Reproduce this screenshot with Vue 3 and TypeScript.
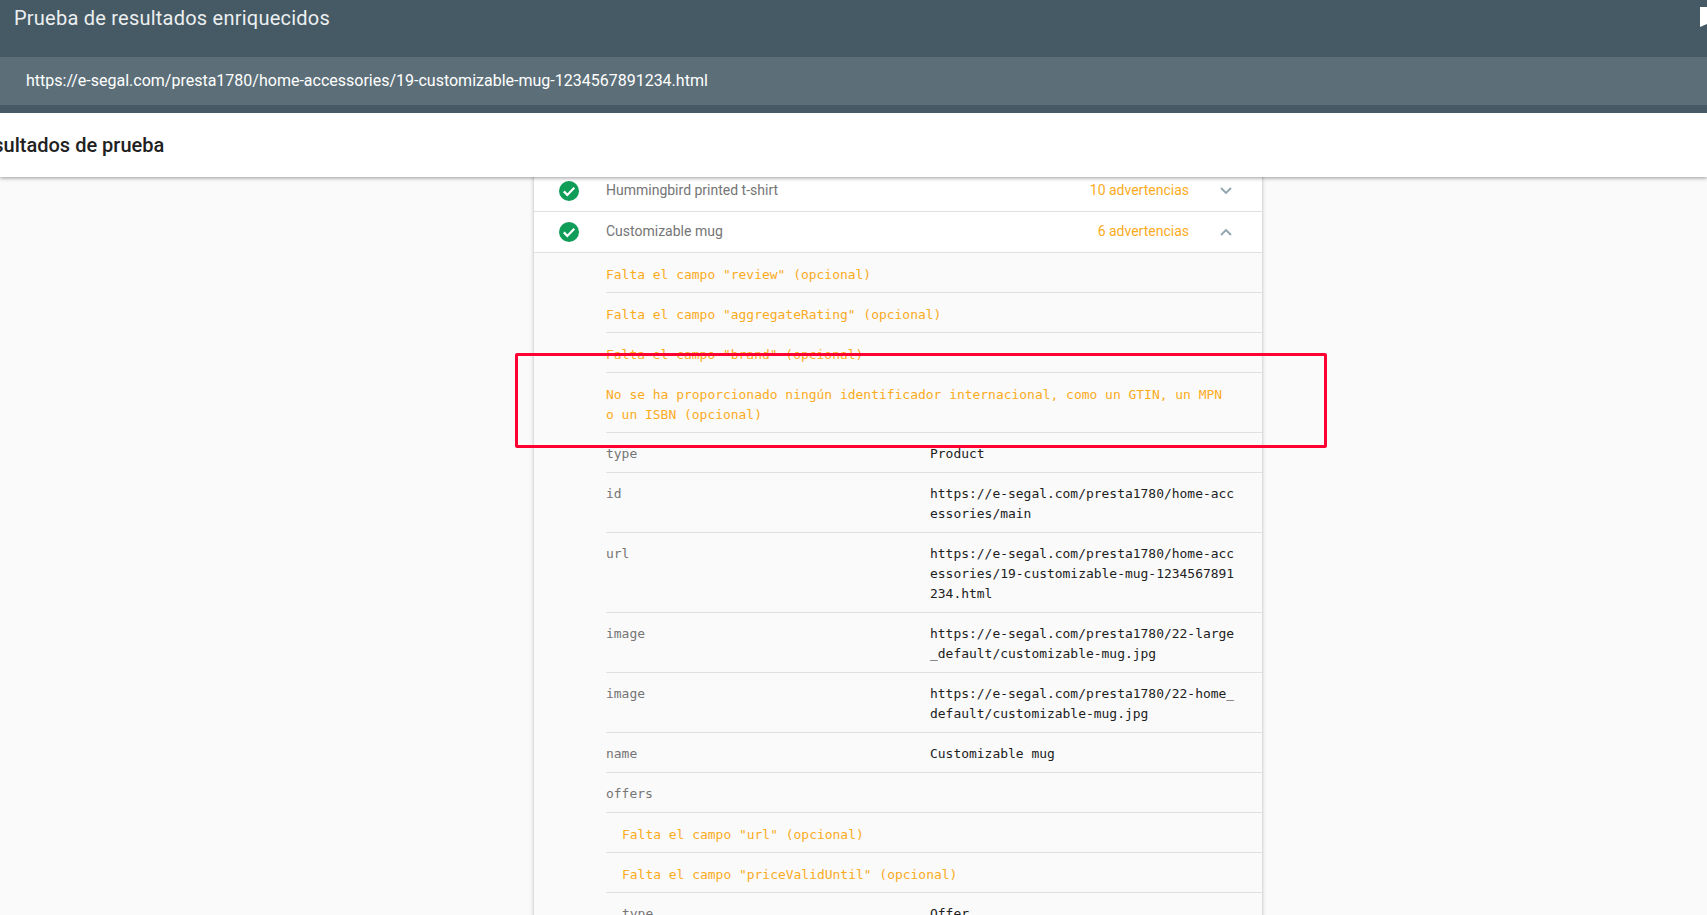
<script setup lang="ts">
interface Row {
  kind: 'warn' | 'prop'
  key?: string
  value?: string
  text?: string
  nested?: boolean
}

const products = [
  { name: 'Hummingbird printed t-shirt', count: '10 advertencias', open: false },
  { name: 'Customizable mug', count: '6 advertencias', open: true },
]

const rows: Row[] = [
  { kind: 'warn', text: 'Falta el campo "review" (opcional)' },
  { kind: 'warn', text: 'Falta el campo "aggregateRating" (opcional)' },
  { kind: 'warn', text: 'Falta el campo "brand" (opcional)' },
  { kind: 'warn', text: 'No se ha proporcionado ningún identificador internacional, como un GTIN, un MPN o un ISBN (opcional)' },
  { kind: 'prop', key: 'type', value: 'Product' },
  { kind: 'prop', key: 'id', value: 'https://e-segal.com/presta1780/home-accessories/main' },
  { kind: 'prop', key: 'url', value: 'https://e-segal.com/presta1780/home-accessories/19-customizable-mug-1234567891234.html' },
  { kind: 'prop', key: 'image', value: 'https://e-segal.com/presta1780/22-large_default/customizable-mug.jpg' },
  { kind: 'prop', key: 'image', value: 'https://e-segal.com/presta1780/22-home_default/customizable-mug.jpg' },
  { kind: 'prop', key: 'name', value: 'Customizable mug' },
  { kind: 'prop', key: 'offers', value: '' },
  { kind: 'warn', text: 'Falta el campo "url" (opcional)', nested: true },
  { kind: 'warn', text: 'Falta el campo "priceValidUntil" (opcional)', nested: true },
  { kind: 'prop', key: 'type', value: 'Offer', nested: true },
]
</script>

<template>
  <div class="page">
    <header class="top">
      <div class="brand">
        <span class="brand-title">Prueba de resultados enriquecidos</span>
        <svg class="bookmark" viewBox="0 0 14 20" width="14" height="20" aria-hidden="true">
          <path d="M0 0h14v20l-7-3-7 3z" fill="#fff" />
        </svg>
      </div>
      <div class="url-bar">https://e-segal.com/presta1780/home-accessories/19-customizable-mug-1234567891234.html</div>
    </header>
    <div class="subbar"><span class="subbar-title">Resultados de prueba</span></div>
    <main class="content">
      <section class="card">
        <div v-for="p in products" :key="p.name" class="product">
          <svg class="check" viewBox="0 0 20 20" width="20" height="20" aria-hidden="true">
            <circle cx="10" cy="10" r="10" fill="#0f9d58" />
            <path d="M4.8 10.4l3.5 3.5 7-7.2" fill="none" stroke="#fff" stroke-width="2.2" />
          </svg>
          <span class="product-name">{{ p.name }}</span>
          <span class="product-count">{{ p.count }}</span>
          <svg class="chev" viewBox="0 0 12 8" width="12" height="8" aria-hidden="true">
            <path :d="p.open ? 'M1 7l5-5 5 5' : 'M1 1l5 5 5-5'" fill="none" stroke="#90a4ae" stroke-width="1.8" />
          </svg>
        </div>
        <div class="details">
          <div v-for="(r, i) in rows" :key="i" class="row" :class="{ nested: r.nested, warn: r.kind === 'warn' }">
            <template v-if="r.kind === 'warn'">
              <span class="warn-text">{{ r.text }}</span>
            </template>
            <template v-else>
              <span class="key" :class="{ 'key-nested': r.nested }">{{ r.key }}</span>
              <span class="value">{{ r.value }}</span>
            </template>
          </div>
        </div>
      </section>
    </main>
    <div class="annotation"></div>
  </div>
</template>

<style>
html, body { margin: 0; overflow: hidden; }
</style>

<style scoped>
.page {
  position: relative;
  width: 1707px;
  height: 915px;
  overflow: hidden;
  display: flex;
  flex-direction: column;
  background: #fafafa;
  font-family: Roboto, "Liberation Sans", sans-serif;
}
.top {
  background: #455a64;
  height: 113px;
  flex: none;
}
.brand {
  height: 57px;
  display: flex;
  justify-content: space-between;
  padding-left: 14px;
  box-sizing: border-box;
  overflow: hidden;
}
.brand-title {
  color: #eceff1;
  font-size: 20px;
  letter-spacing: 0.23px;
  line-height: 36px;
}
.bookmark {
  margin-top: 7px;
  margin-right: -7px;
  flex: none;
}
.url-bar {
  height: 48px;
  background: #5c6f79;
  color: #fff;
  font-size: 16px;
  line-height: 47px;
  padding-left: 26px;
}
.subbar {
  position: relative;
  z-index: 1;
  height: 64px;
  flex: none;
  background: #fff;
  overflow: hidden;
  box-shadow: 0 1px 4px rgba(0, 0, 0, 0.4);
  clip-path: inset(0 0 -12px 0);
}
.subbar-title {
  display: block;
  margin-left: -30px;
  font-size: 20px;
  font-weight: 500;
  line-height: 64px;
  color: #212121;
  white-space: nowrap;
}
.content {
  flex: 1;
  min-height: 0;
  overflow: hidden;
  padding-left: 534px;
}
.card {
  width: 728px;
  margin-top: -6px;
  height: max-content;
  background: #fafafa;
  box-shadow: 0 0 4px rgba(0, 0, 0, 0.28);
}
.product {
  height: 41px;
  box-sizing: border-box;
  background: #fff;
  border-bottom: 1px solid #e0e0e0;
  display: flex;
  align-items: center;
  padding-left: 25px;
  padding-right: 30px;
  font-size: 14px;
}
.check { flex: none; }
.product-name {
  margin-left: 27px;
  color: #757575;
  flex: 1;
  position: relative;
  top: -1px;
}
.product-count {
  color: #fbab1c;
  position: relative;
  top: -1px;
}
.chev {
  margin-left: 31px;
  flex: none;
}
.details {
  padding-left: 72px;
  font-family: "DejaVu Sans Mono", "Liberation Mono", monospace;
  font-size: 12.96px;
  line-height: 20px;
}
.row {
  display: grid;
  grid-template-columns: 324px 310px;
  padding: 11px 0 8px;
  border-bottom: 1px solid #e0e0e0;
}
.row.warn {
  display: block;
  padding: 12px 30px 7px 0;
}
.row.nested.warn,
.key-nested {
  padding-left: 16px;
}
.warn-text { color: #fbab1c; }
.key { color: #757575; box-sizing: border-box; }
.value { color: #212121; word-break: break-all; }
.annotation {
  position: absolute;
  left: 515px;
  top: 353px;
  width: 812px;
  height: 95px;
  box-sizing: border-box;
  border: 3px solid #ff0033;
  border-radius: 2px;
  z-index: 2;
}
</style>
